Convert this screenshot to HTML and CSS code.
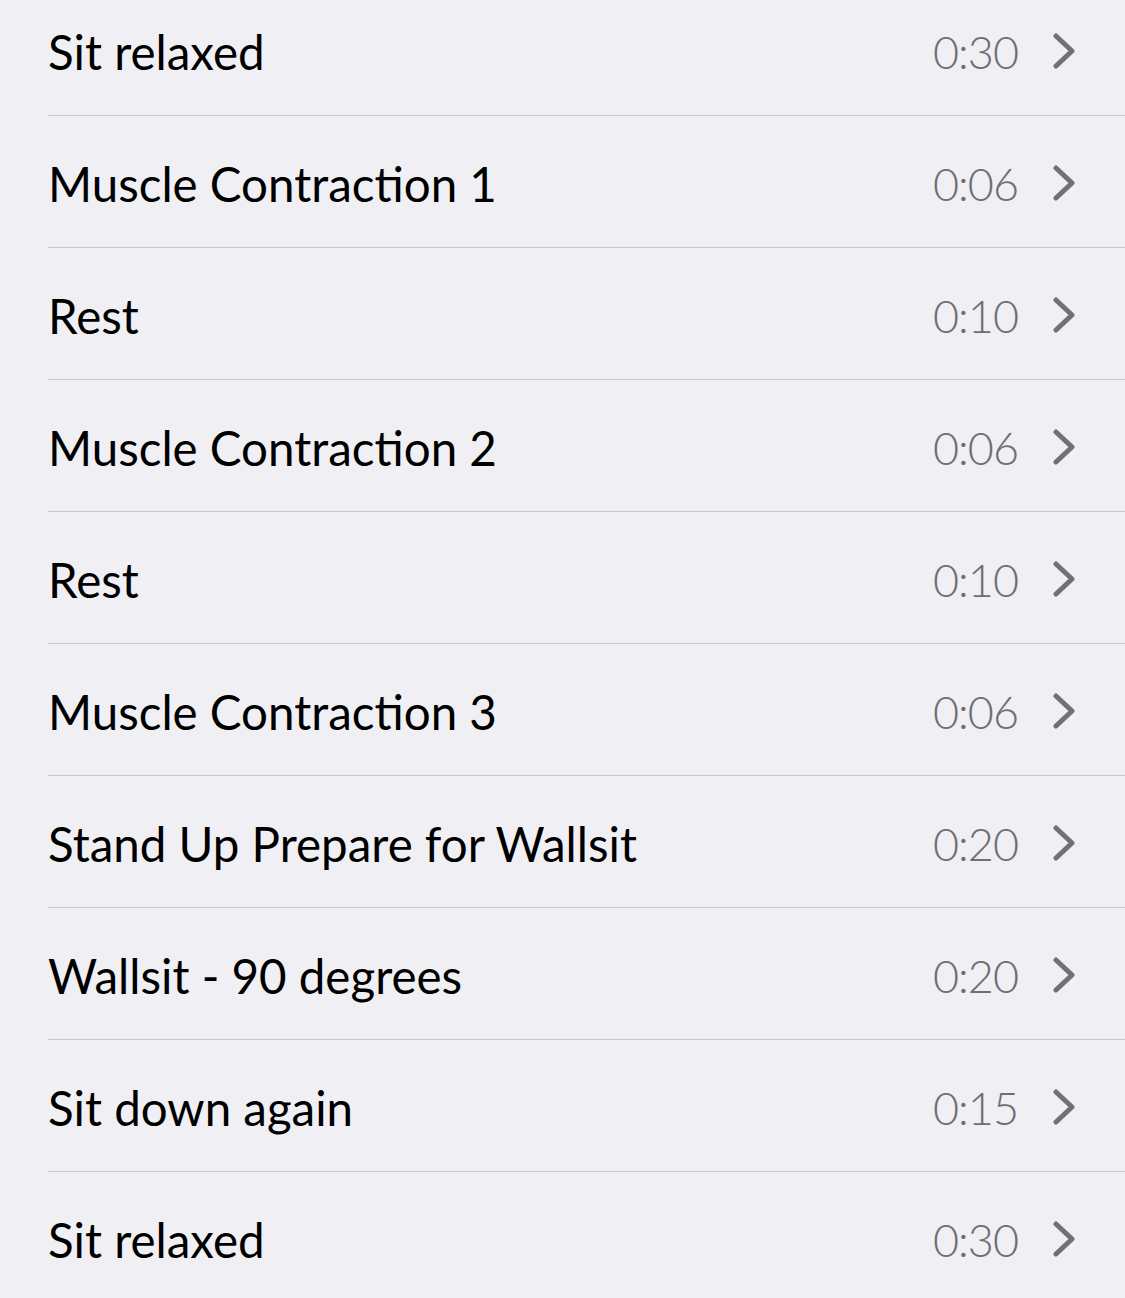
FILE: index.html
```html
<!DOCTYPE html>
<html>
<head>
<meta charset="utf-8">
<link rel="stylesheet" href="styles.css">
</head>
<body>
<ul class="list">
  <li class="row"><div class="cell"><span class="title">Sit relaxed</span><span class="time">0:30</span><svg class="chev" viewBox="0 0 24 36"><path d="M4 3 L20 18 L4 33"/></svg></div></li>
  <li class="row"><div class="cell"><span class="title">Muscle Contraction 1</span><span class="time">0:06</span><svg class="chev" viewBox="0 0 24 36"><path d="M4 3 L20 18 L4 33"/></svg></div></li>
  <li class="row"><div class="cell"><span class="title">Rest</span><span class="time">0:10</span><svg class="chev" viewBox="0 0 24 36"><path d="M4 3 L20 18 L4 33"/></svg></div></li>
  <li class="row"><div class="cell"><span class="title">Muscle Contraction 2</span><span class="time">0:06</span><svg class="chev" viewBox="0 0 24 36"><path d="M4 3 L20 18 L4 33"/></svg></div></li>
  <li class="row"><div class="cell"><span class="title">Rest</span><span class="time">0:10</span><svg class="chev" viewBox="0 0 24 36"><path d="M4 3 L20 18 L4 33"/></svg></div></li>
  <li class="row"><div class="cell"><span class="title">Muscle Contraction 3</span><span class="time">0:06</span><svg class="chev" viewBox="0 0 24 36"><path d="M4 3 L20 18 L4 33"/></svg></div></li>
  <li class="row"><div class="cell"><span class="title">Stand Up Prepare for Wallsit</span><span class="time">0:20</span><svg class="chev" viewBox="0 0 24 36"><path d="M4 3 L20 18 L4 33"/></svg></div></li>
  <li class="row"><div class="cell"><span class="title">Wallsit - 90 degrees</span><span class="time">0:20</span><svg class="chev" viewBox="0 0 24 36"><path d="M4 3 L20 18 L4 33"/></svg></div></li>
  <li class="row"><div class="cell"><span class="title">Sit down again</span><span class="time">0:15</span><svg class="chev" viewBox="0 0 24 36"><path d="M4 3 L20 18 L4 33"/></svg></div></li>
  <li class="row"><div class="cell"><span class="title">Sit relaxed</span><span class="time">0:30</span><svg class="chev" viewBox="0 0 24 36"><path d="M4 3 L20 18 L4 33"/></svg></div></li>
</ul>
</body>
</html>
```
FILE: styles.css
```css
html, body {
  margin: 0;
  padding: 0;
  background: #efeff4;
  overflow: hidden;
}
.list {
  list-style: none;
  margin: -16px 0 0 0;
  padding: 0;
  font-family: "Lato", "Open Sans", sans-serif;
}
.row {
  padding-left: 48px;
}
.cell {
  height: 131px;
  border-bottom: 1px solid #c8c7cc;
  display: flex;
  align-items: center;
  padding-right: 49px;
}
.row:last-child .cell {
  border-bottom: none;
}
.title {
  flex: 1;
  font-size: 47.5px;
  color: #000;
  padding-top: 4px;
}
.time {
  font-size: 45px;
  font-weight: 300;
  letter-spacing: -1px;
  color: #6e6e73;
  padding-top: 4px;
}
.chev {
  width: 24px;
  height: 36px;
  margin-left: 34px;
  margin-top: 2px;
  fill: none;
  stroke: #707075;
  stroke-width: 5;
  stroke-linecap: round;
  stroke-linejoin: round;
}
```
